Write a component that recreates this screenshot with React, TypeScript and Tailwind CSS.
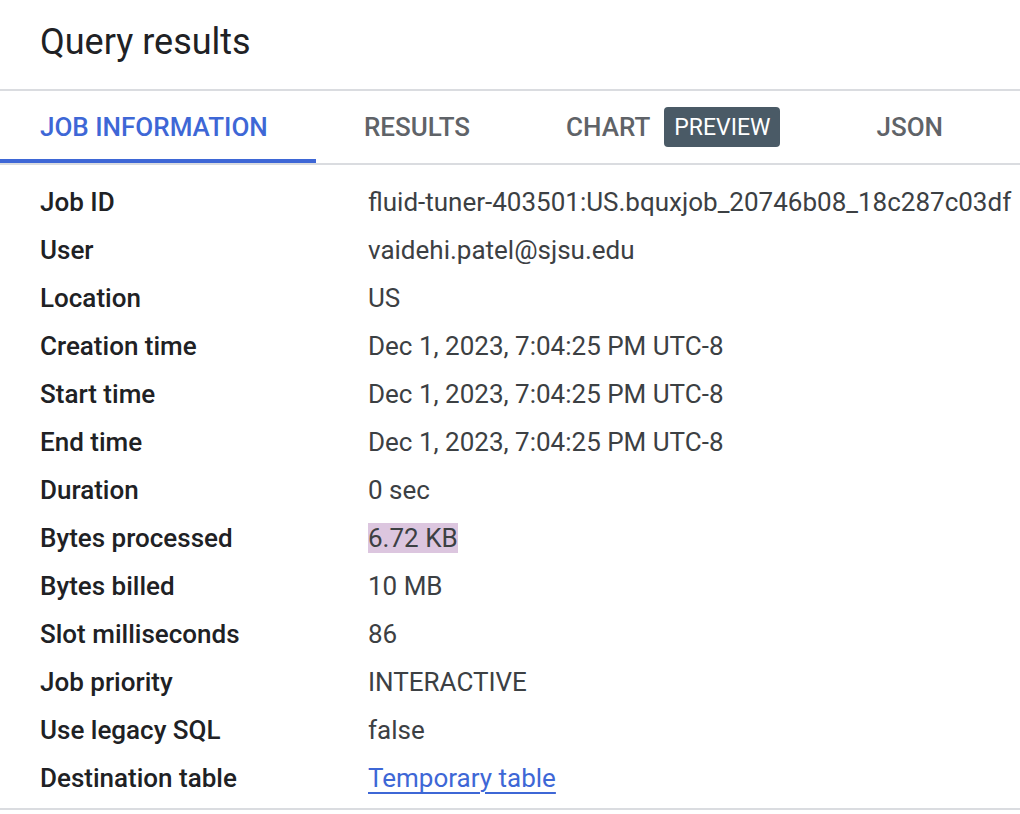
const rows: { label: string; value: string; kind?: "mark" | "link" }[] = [
  { label: "Job ID", value: "fluid-tuner-403501:US.bquxjob_20746b08_18c287c03df" },
  { label: "User", value: "vaidehi.patel@sjsu.edu" },
  { label: "Location", value: "US" },
  { label: "Creation time", value: "Dec 1, 2023, 7:04:25 PM UTC-8" },
  { label: "Start time", value: "Dec 1, 2023, 7:04:25 PM UTC-8" },
  { label: "End time", value: "Dec 1, 2023, 7:04:25 PM UTC-8" },
  { label: "Duration", value: "0 sec" },
  { label: "Bytes processed", value: "6.72 KB", kind: "mark" },
  { label: "Bytes billed", value: "10 MB" },
  { label: "Slot milliseconds", value: "86" },
  { label: "Job priority", value: "INTERACTIVE" },
  { label: "Use legacy SQL", value: "false" },
  { label: "Destination table", value: "Temporary table", kind: "link" },
];

export default function App() {
  return (
    <div className="w-[1020px] h-[814px] bg-white overflow-hidden font-['Roboto',sans-serif]">
      <div className="h-[91px] pt-[21px] pl-10 border-b-2 border-[#dadce0]">
        <h1 className="text-[36px] leading-[42px] text-[#202124]">Query results</h1>
      </div>

      <div className="flex h-[74px] border-b-2 border-[#dadce0] text-[26px] font-medium">
        <div className="relative flex items-center w-[316px] pl-10 text-[#3e67d6]">
          JOB INFORMATION
          <div className="absolute left-0 right-0 bottom-0 h-1 bg-[#3e67d6]" />
        </div>
        <div className="flex items-center px-12 text-[#5f6368]">RESULTS</div>
        <div className="flex items-center px-12 text-[#5f6368]">
          CHART
          <span className="ml-[14px] flex items-center h-10 px-[10px] pt-[2px] rounded-[4px] bg-[#4a5a66] text-white text-[23px] font-normal">
            PREVIEW
          </span>
        </div>
        <div className="flex items-center px-12 text-[#5f6368]">JSON</div>
      </div>

      <div className="pt-[13px] pb-[6px] border-b-2 border-[#dadce0]">
        {rows.map((r) => (
          <div key={r.label} className="flex h-12 items-center text-[26px] leading-[48px]">
            <div className="w-[368px] pl-10 font-medium text-[#202124]">{r.label}</div>
            <div className="text-[#3c4043] whitespace-nowrap">
              {r.kind === "mark" ? (
                <span className="bg-[#dcc6df]">{r.value}</span>
              ) : r.kind === "link" ? (
                <span className="text-[#3e67d6] underline decoration-2 underline-offset-[5px]">{r.value}</span>
              ) : (
                r.value
              )}
            </div>
          </div>
        ))}
      </div>
    </div>
  );
}
